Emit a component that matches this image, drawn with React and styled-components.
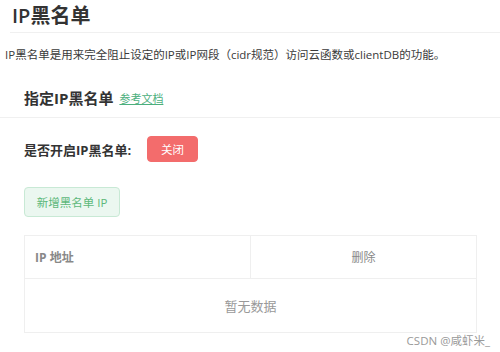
import React from 'react';
import styled, { createGlobalStyle } from 'styled-components';

const Global = createGlobalStyle`
  html, body {
    margin: 0;
    padding: 0;
    background: #fff;
    font-family: "Open Sans", "Noto Sans CJK SC", sans-serif;
  }
`;

const Page = styled.div`
  width: 500px;
  height: 352px;
  position: relative;
  overflow: hidden;
`;

const Header = styled.div`
  margin-left: 10px;
  height: 32px;
  padding-left: 2px;
  border-bottom: 1px solid #f0f0f0;
  display: flex;
  align-items: center;
`;

const Title = styled.h1`
  margin: 0;
  font-size: 20px;
  font-weight: 600;
  color: #333;
  line-height: 28px;
`;

const Desc = styled.p`
  margin: 13px 0 0 5px;
  font-size: 11.5px;
  color: #3a3a3a;
  line-height: 18px;
  white-space: nowrap;
`;

const SectionHead = styled.div`
  margin-top: 13px;
  height: 40px;
  padding-left: 24px;
  display: flex;
  align-items: center;
  gap: 6px;
  border-bottom: 1px solid #f0f0f0;
`;

const SectionTitle = styled.h2`
  margin: 0;
  font-size: 15px;
  font-weight: 700;
  color: #333;
`;

const DocLink = styled.a`
  font-size: 11px;
  color: #4caf7d;
  text-decoration: underline;
  margin-top: 2px;
`;

const Body = styled.div`
  padding: 18px 0 0 24px;
`;

const SwitchRow = styled.div`
  display: flex;
  align-items: center;
  height: 26px;
`;

const Label = styled.span`
  font-size: 13px;
  font-weight: 700;
  color: #333;
  width: 123px;
`;

const Button = styled.button`
  font-family: inherit;
  font-size: 11.5px;
  border-radius: 4px;
  cursor: pointer;
  padding: 0;
  height: ${p => p.$h}px;
  width: ${p => p.$w}px;
  color: ${p => (p.$kind === 'danger' ? '#fff' : '#5cb87a')};
  background: ${p => (p.$kind === 'danger' ? '#f36c6c' : '#ebf7f0')};
  border: 1px solid ${p => (p.$kind === 'danger' ? '#f36c6c' : '#c8e9d5')};
`;

const AddWrap = styled.div`
  margin-top: 25px;
`;

const Table = styled.div`
  margin-top: 18px;
  width: 451px;
  border: 1px solid #efefef;
  display: grid;
  grid-template-columns: 226px 1fr;
`;

const HeadCell = styled.div`
  height: 42px;
  border-bottom: 1px solid #efefef;
  border-right: ${p => (p.$last ? 'none' : '1px solid #efefef')};
  display: flex;
  align-items: center;
  justify-content: ${p => (p.$center ? 'center' : 'flex-start')};
  padding-left: ${p => (p.$center ? 0 : 10)}px;
  font-size: 12px;
  font-weight: ${p => (p.$center ? 400 : 700)};
  color: #888;
`;

const Empty = styled.div`
  grid-column: 1 / 3;
  height: 53px;
  display: flex;
  align-items: center;
  justify-content: center;
  font-size: 13px;
  color: #999;
`;

const Watermark = styled.div`
  position: absolute;
  right: 10px;
  bottom: 4px;
  font-size: 11.5px;
  color: #999;
`;

export default function App() {
  return (
    <Page>
      <Global />
      <Header>
        <Title>IP黑名单</Title>
      </Header>
      <Desc>IP黑名单是用来完全阻止设定的IP或IP网段（cidr规范）访问云函数或clientDB的功能。</Desc>
      <SectionHead>
        <SectionTitle>指定IP黑名单</SectionTitle>
        <DocLink href="#">参考文档</DocLink>
      </SectionHead>
      <Body>
        <SwitchRow>
          <Label>是否开启IP黑名单:</Label>
          <Button $kind="danger" $w={51} $h={26}>关闭</Button>
        </SwitchRow>
        <AddWrap>
          <Button $w={96} $h={30}>新增黑名单 IP</Button>
        </AddWrap>
        <Table>
          <HeadCell>IP 地址</HeadCell>
          <HeadCell $center $last>删除</HeadCell>
          <Empty>暂无数据</Empty>
        </Table>
      </Body>
      <Watermark>CSDN @咸虾米_</Watermark>
    </Page>
  );
}
